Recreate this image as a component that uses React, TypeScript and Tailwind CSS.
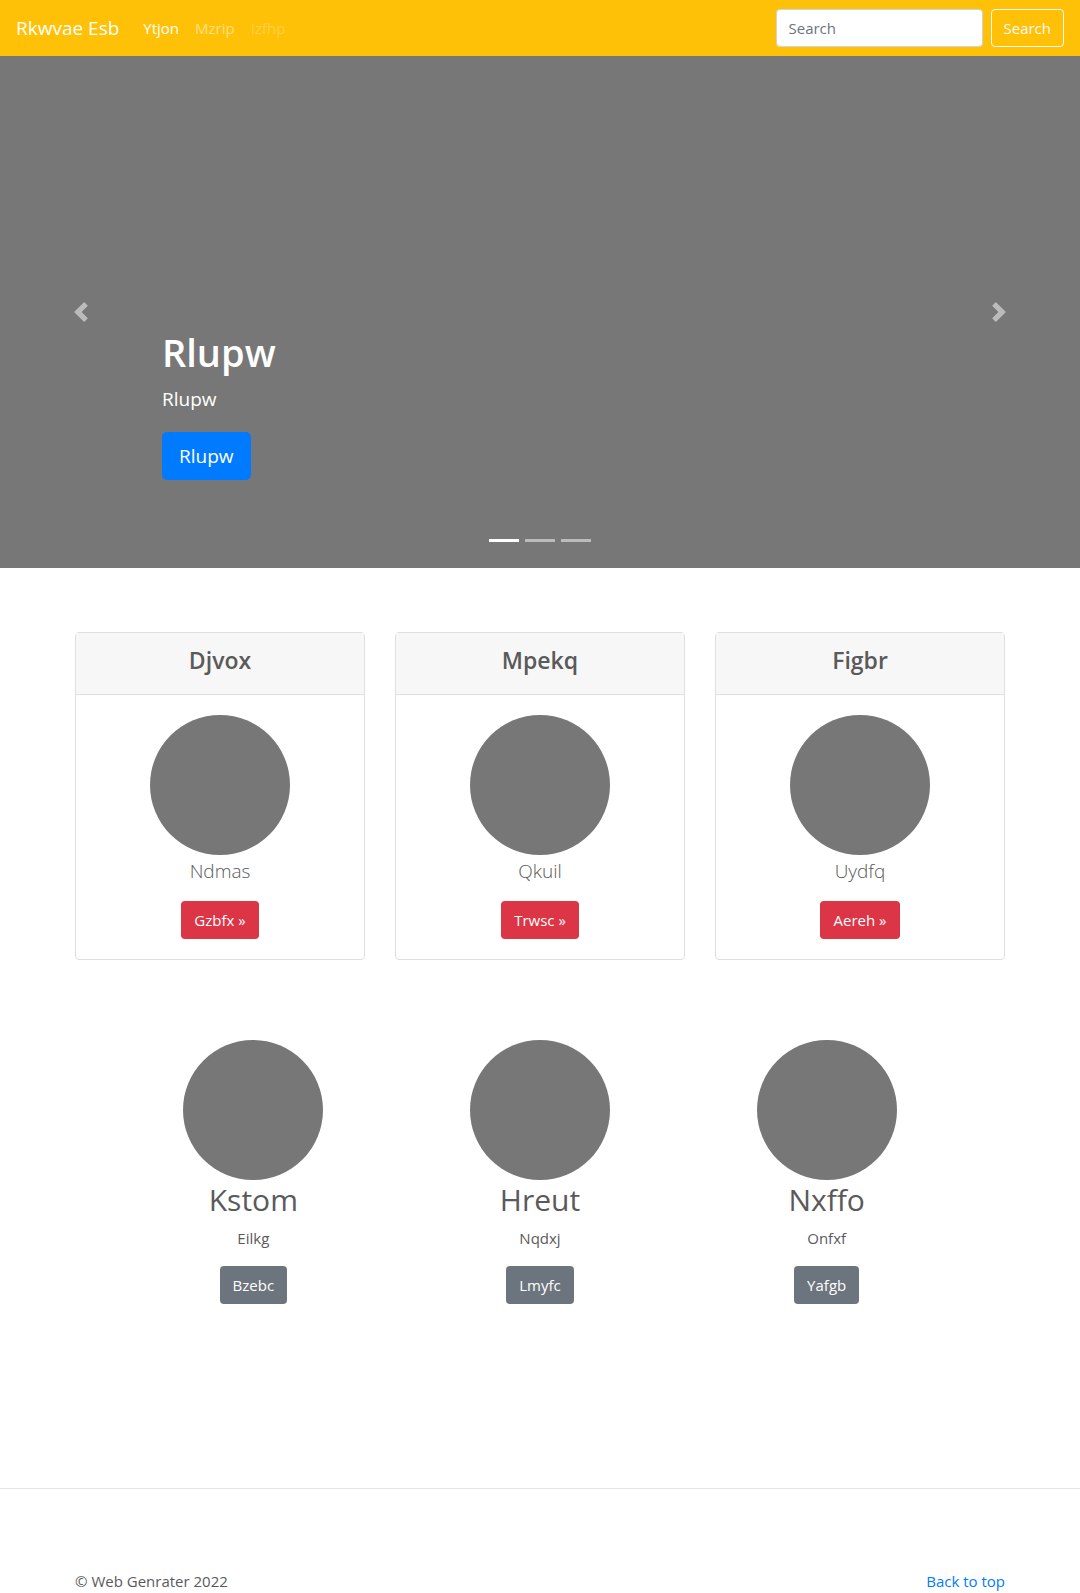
import React from "react";

const features = [
  { title: "Djvox", text: "Ndmas", action: "Gzbfx" },
  { title: "Mpekq", text: "Qkuil", action: "Trwsc" },
  { title: "Figbr", text: "Uydfq", action: "Aereh" },
];

const members = [
  { name: "Kstom", text: "Eilkg", action: "Bzebc" },
  { name: "Hreut", text: "Nqdxj", action: "Lmyfc" },
  { name: "Nxffo", text: "Onfxf", action: "Yafgb" },
];

function Navbar() {
  return (
    <nav className="flex h-14 items-center bg-[#ffc107] px-4 text-white">
      <a href="#" className="mr-6 text-[19px] leading-[30px]">Rkwvae Esb</a>
      <ul className="flex flex-1 gap-4">
        <li><a href="#">Ytjon</a></li>
        <li><a href="#" className="text-white/50">Mzrip</a></li>
        <li><a href="#" aria-disabled="true" className="text-white/25">Izfhp</a></li>
      </ul>
      <form className="flex gap-2" onSubmit={(e) => e.preventDefault()}>
        <input
          type="search"
          placeholder="Search"
          aria-label="Search"
          className="h-[38px] w-[207px] rounded border border-[#ced4da] bg-white px-3 text-[#495057] placeholder:text-[#6c757d]"
        />
        <button type="submit" className="h-[38px] rounded border border-[#f8f9fa] px-3 text-[#f8f9fa]">
          Search
        </button>
      </form>
    </nav>
  );
}

function Arrow({ d }: { d: string }) {
  return (
    <svg viewBox="0 0 8 8" className="size-5 fill-white" aria-hidden="true">
      <path d={d} />
    </svg>
  );
}

function Carousel() {
  return (
    <section className="relative h-[512px] bg-[#777] text-white">
      <div className="flex h-full flex-col justify-end px-[15%] pb-[88px]">
        <h1 className="mb-2 text-[38px] leading-12 font-semibold">Rlupw</h1>
        <p className="mb-[18px] text-[19px] leading-[30px]">Rlupw</p>
        <a href="#" className="self-start rounded-[5px] bg-[#007bff] px-[17px] py-[9px] text-[19px] leading-[30px]">
          Rlupw
        </a>
      </div>
      <button aria-label="Previous" className="absolute inset-y-0 left-0 flex w-[15%] items-center justify-center opacity-50">
        <Arrow d="M5.25 0l-4 4 4 4 1.5-1.5L4.25 4l2.5-2.5L5.25 0z" />
      </button>
      <button aria-label="Next" className="absolute inset-y-0 right-0 flex w-[15%] items-center justify-center opacity-50">
        <Arrow d="M2.75 0l-1.5 1.5L3.75 4l-2.5 2.5L2.75 8l4-4-4-4z" />
      </button>
      <div className="absolute inset-x-0 bottom-[26px] flex justify-center gap-1.5">
        <button aria-label="Slide 1" className="h-[3px] w-[30px] bg-white" />
        <button aria-label="Slide 2" className="h-[3px] w-[30px] bg-white/50" />
        <button aria-label="Slide 3" className="h-[3px] w-[30px] bg-white/50" />
      </div>
    </section>
  );
}

export default function App() {
  return (
    <div className="bg-white font-['Open_Sans','Noto_Sans',sans-serif] text-[15px] leading-6 text-[#5a5a5a]">
      <Navbar />
      <Carousel />
      <main>
        <section className="mx-auto mt-16 grid max-w-[960px] grid-cols-3 gap-[30px] px-[15px] text-center">
          {features.map((f) => (
            <article key={f.title} className="rounded border border-[#dfdfdf]">
              <header className="border-b border-[#dfdfdf] bg-[#f7f7f7] pt-[13px] pb-[19px]">
                <h4 className="text-[23px] leading-[29px] font-semibold">{f.title}</h4>
              </header>
              <div className="flex flex-col items-center p-5">
                <div className="size-[140px] rounded-full bg-[#777]" />
                <p className="mb-[14px] text-[19px] leading-8 font-light">{f.text}</p>
                <a href="#" className="rounded bg-[#dc3545] px-[13px] py-[7px] text-white">{f.action} »</a>
              </div>
            </article>
          ))}
        </section>
        <section className="mx-auto mt-20 grid max-w-[860px] grid-cols-3 text-center">
          {members.map((m) => (
            <article key={m.name} className="flex flex-col items-center">
              <div className="size-[140px] rounded-full bg-[#777]" />
              <h2 className="mb-1.5 text-[30px] leading-10">{m.name}</h2>
              <p className="mb-4">{m.text}</p>
              <a href="#" className="rounded bg-[#6c757d] px-[13px] py-[7px] text-white">{m.action}</a>
            </article>
          ))}
        </section>
        <hr className="mt-46 border-[#e5e5e5]" />
      </main>
      <footer className="mx-auto mt-20 flex max-w-[960px] justify-between px-[15px]">
        <p>© Web Genrater 2022</p>
        <a href="#" className="text-[#007bff]">Back to top</a>
      </footer>
    </div>
  );
}
